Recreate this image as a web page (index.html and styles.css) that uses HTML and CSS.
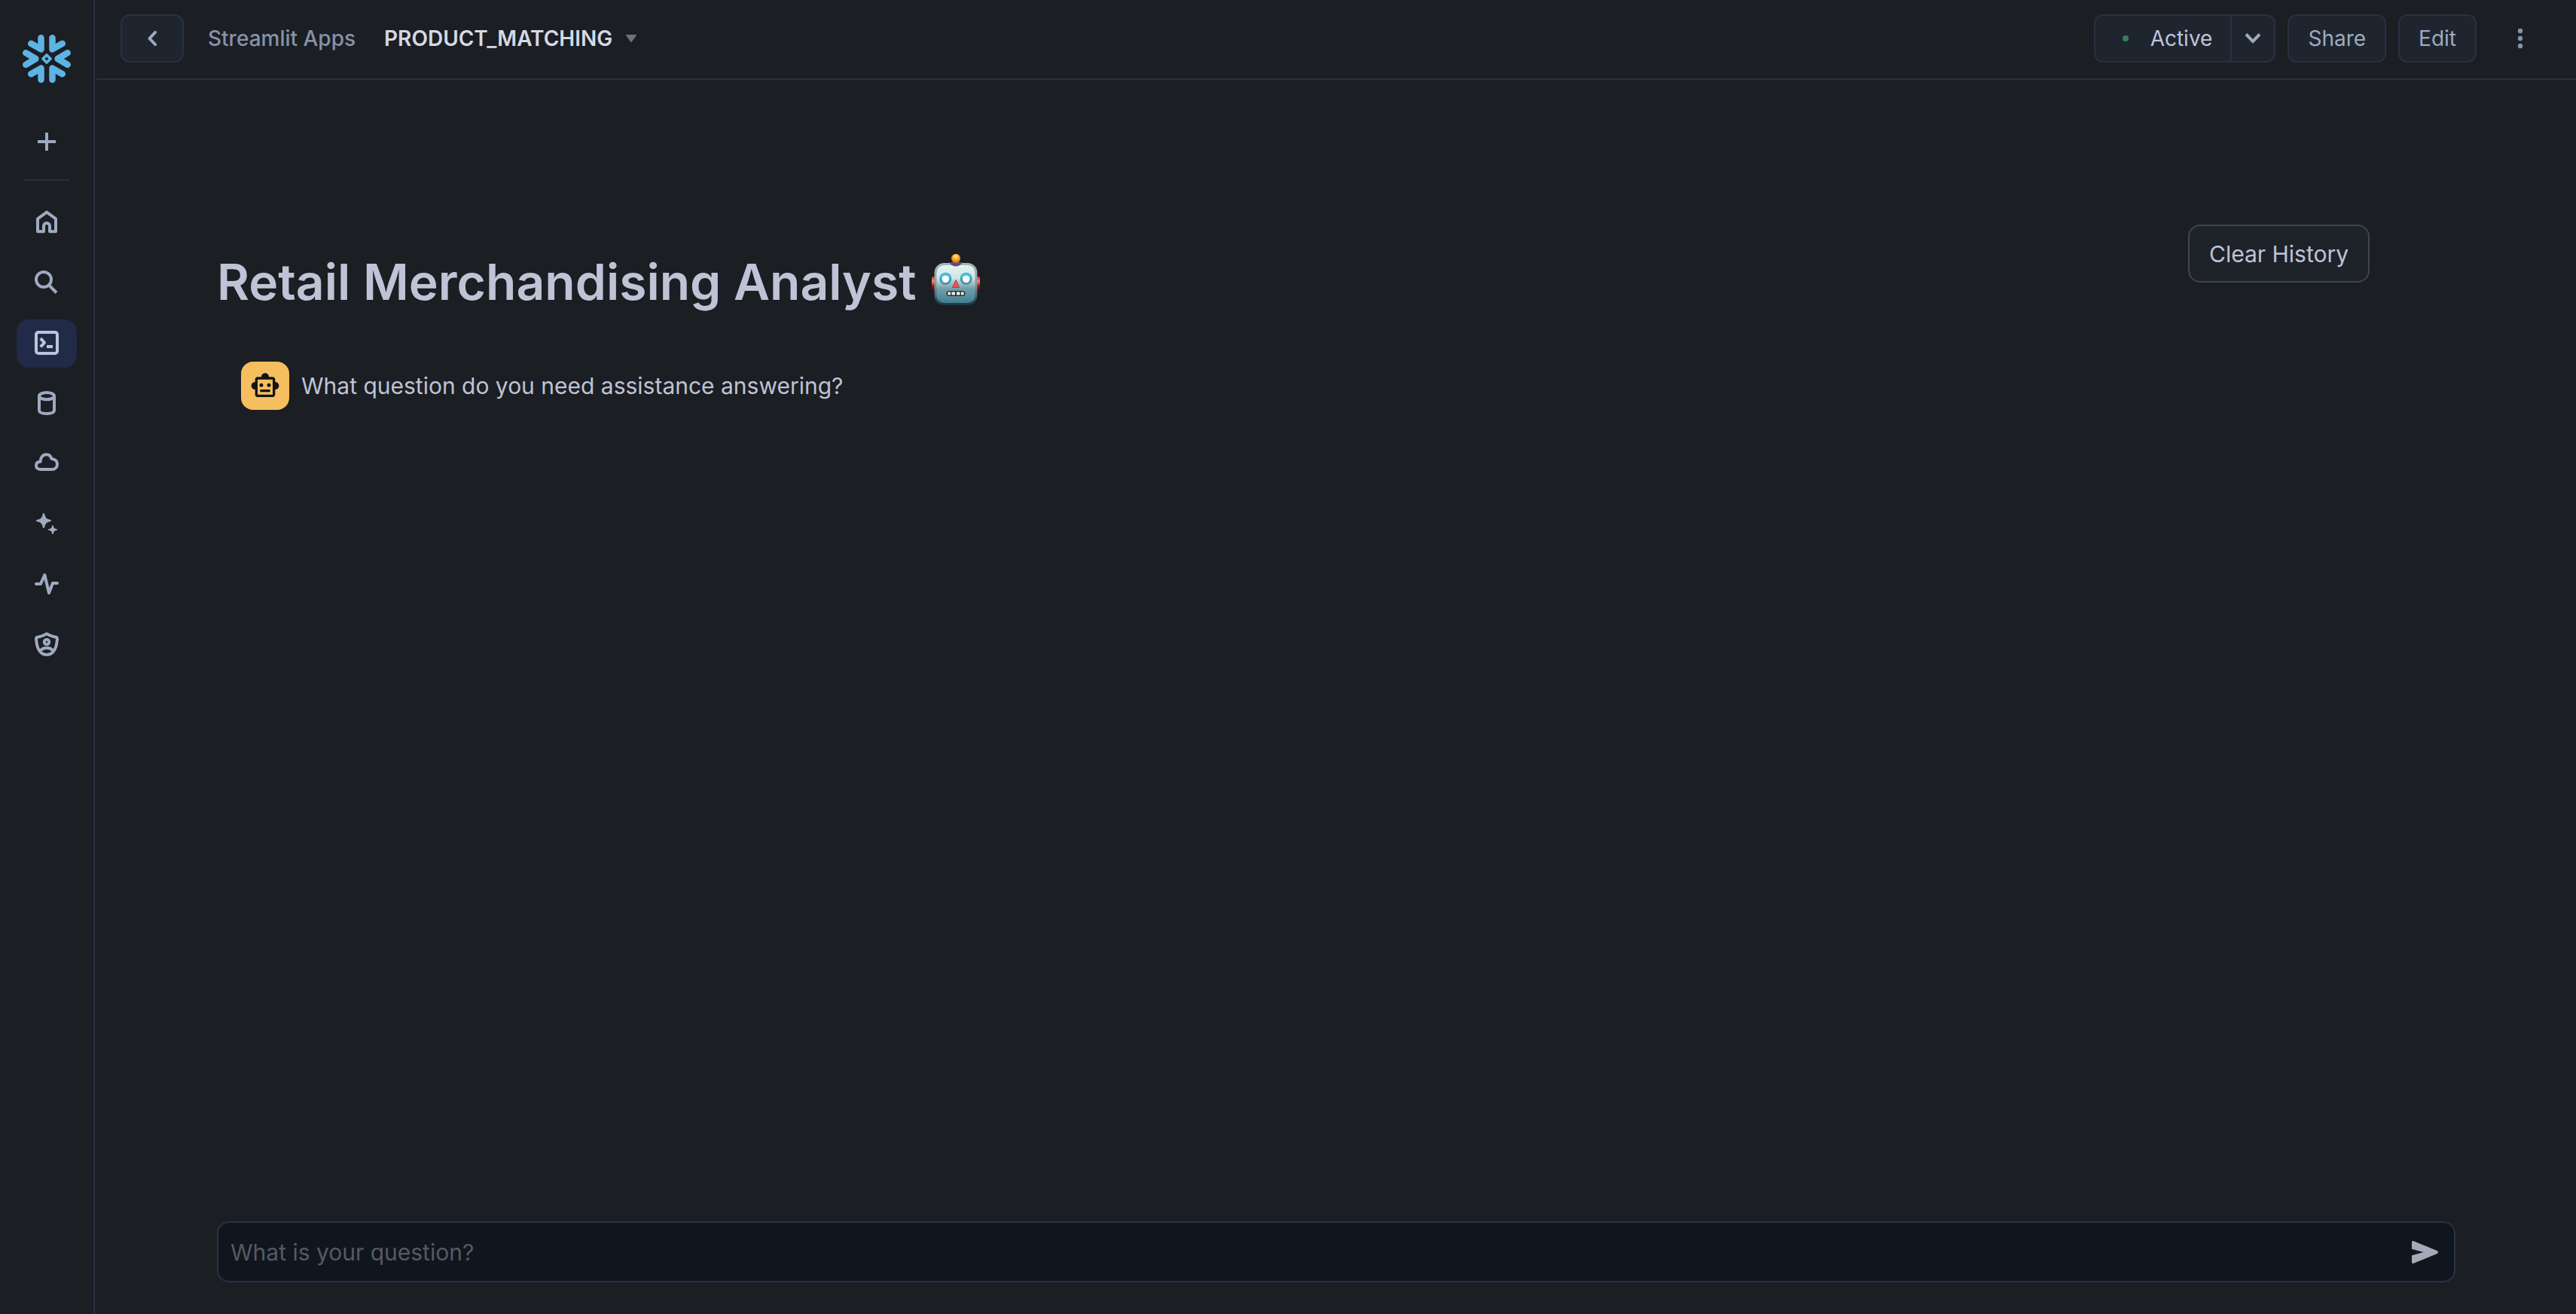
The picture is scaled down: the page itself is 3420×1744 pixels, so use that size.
FILE: index.html
```html
<!DOCTYPE html>
<html lang="en">
<head>
<meta charset="utf-8">
<title>PRODUCT_MATCHING - Streamlit Apps</title>
<link rel="stylesheet" href="styles.css">
</head>
<body>
<div class="app">
  <aside class="sidebar">
    <a class="logo" href="#" aria-label="Snowflake">
      <svg width="64" height="64" viewBox="0 0 64 64" fill="none" stroke="currentColor" stroke-width="8.5" stroke-linecap="round" stroke-linejoin="round">
        <path d="M24.5 4.3V19.4L11.2 11.8M39.5 4.3V19.4L52.8 11.8M24.5 59.7V44.6L11.2 52.2M39.5 59.7V44.6L52.8 52.2M4.3 24.2L17.4 32 4.3 39.8M59.7 24.2L46.6 32 59.7 39.8"/>
        <path stroke-width="3.8" d="M32 27L37 32 32 37 27 32z"/>
      </svg>
    </a>
    <button class="create" type="button" aria-label="Create">
      <svg width="24" height="24" viewBox="0 0 24 24" fill="currentColor"><path d="M10 0h4v10h10v4H14v10h-4V14H0v-4h10z"/></svg>
    </button>
    <nav class="nav">
      <a class="nav-item" href="#" aria-label="Home">
        <svg class="icon" viewBox="0 0 32 32"><path d="M4 28.3V11.4L16 2.6 28 11.4V28.3H20V21a4 4 0 0 0-8 0v7.3z"/></svg>
      </a>
      <a class="nav-item" href="#" aria-label="Search">
        <svg class="icon" viewBox="0 0 32 32"><circle cx="12" cy="12" r="10"/><path d="M19 19.5L29 29.5"/></svg>
      </a>
      <a class="nav-item nav-item-active" href="#" aria-label="Projects">
        <svg class="icon" viewBox="0 0 32 32"><rect x="2" y="2" width="28" height="28" rx="3"/><path d="M7.8 10.2L13 15.8 7.8 21.4M16 21h8"/></svg>
      </a>
      <a class="nav-item" href="#" aria-label="Data">
        <svg class="icon" viewBox="0 0 32 32"><ellipse cx="16" cy="6.6" rx="10" ry="4.6"/><path d="M6 7v18.5C6 28.500 10 30 16 30s10-1.500 10-4.500V7"/></svg>
      </a>
      <a class="nav-item" href="#" aria-label="Data products">
        <svg class="icon" viewBox="0 0 32 32"><path d="M7.500 24C4 24 2 21.500 2 19c0-3 2-5 5.500-5.200C8 8 11 4.300 15.500 4.300c3.500 0 6 2 7 5.700C27 10.200 30 13 30 17s-3 7-7 7z"/></svg>
      </a>
      <a class="nav-item" href="#" aria-label="AI and ML">
        <svg class="icon icon-solid" viewBox="0 0 32 32"><path d="M12 2c1 0 1.200 1 1.500 2.500.8 3.600 2.400 5.200 6 6C21 10.800 22 11 22 12s-1 1.200-2.500 1.500c-3.600.8-5.200 2.400-6 6C13.200 21 13 22 12 22s-1.200-1-1.500-2.500c-.8-3.600-2.400-5.200-6-6C3 13.200 2 13 2 12s1-1.200 2.500-1.500c3.600-.8 5.200-2.400 6-6C10.800 3 11 2 12 2zM24 18c.7 0 .8.600 1 1.500.5 2.200 1.300 3 3.500 3.500.9.200 1.500.3 1.500 1s-.6.800-1.500 1c-2.200.5-3 1.300-3.500 3.500-.2.900-.3 1.500-1 1.500s-.8-.6-1-1.500c-.5-2.200-1.300-3-3.500-3.500-.9-.2-1.500-.3-1.500-1s.6-.8 1.500-1c2.200-.5 3-1.300 3.500-3.500.2-.9.300-1.500 1-1.500z"/></svg>
      </a>
      <a class="nav-item" href="#" aria-label="Monitoring">
        <svg class="icon icon-round" viewBox="0 0 32 32"><path d="M2 16h6L13.300 4 19 28 24 15h6"/></svg>
      </a>
      <a class="nav-item" href="#" aria-label="Admin">
        <svg class="icon" viewBox="0 0 32 32"><path d="M16 2.200C12.500 4.500 7.500 6 3.500 6.800 1.800 7.200 2 8.500 2.100 10 2.600 17 5 30 16 30S29.400 17 29.900 10c.1-1.500.3-2.800-1.400-3.200C24.500 6 19.500 4.500 16 2.200z"/><circle cx="16" cy="13" r="3.200"/><path d="M8 24.500c1.500-2.500 4.500-3.500 8-3.500s6.500 1 8 3.500"/></svg>
      </a>
    </nav>
  </aside>

  <div class="page">
    <header class="topbar">
      <button class="btn back" type="button" aria-label="Back">
        <svg width="12" height="20" viewBox="0 0 12 20" fill="none" stroke="currentColor" stroke-width="4" stroke-linecap="round" stroke-linejoin="round"><path d="M10 2L2.500 10 10 18"/></svg>
      </button>
      <a class="crumb" href="#">Streamlit Apps</a>
      <button class="app-name" type="button">
        PRODUCT_MATCHING
        <svg width="14" height="10" viewBox="0 0 14 10" fill="currentColor"><path d="M1 0h12q1.600 0 .6 1.500L8 9.300q-1 1.200-2 0L.4 1.500Q-.6 0 1 0z"/></svg>
      </button>
      <div class="actions">
        <div class="split">
          <button class="btn status" type="button"><span class="dot"></span>Active</button>
          <button class="btn more-status" type="button" aria-label="Status options">
            <svg width="22" height="14" viewBox="0 0 22 14" fill="none" stroke="currentColor" stroke-width="4"><path d="M2 1.500L11 10.800 20 1.500"/></svg>
          </button>
        </div>
        <button class="btn" type="button">Share</button>
        <button class="btn" type="button">Edit</button>
        <button class="kebab" type="button" aria-label="More options">
          <svg width="8" height="28" viewBox="0 0 8 28" fill="currentColor"><circle cx="4" cy="4" r="3.200"/><circle cx="4" cy="14" r="3.200"/><circle cx="4" cy="24" r="3.200"/></svg>
        </button>
      </div>
    </header>

    <main class="content">
      <div class="heading">
        <h1 class="title">Retail Merchandising Analyst
          <svg class="robot" role="img" aria-label="robot" viewBox="0 0 64 68">
            <defs>
              <linearGradient id="face" x1="0" y1="0" x2="0" y2="1"><stop offset="0" stop-color="#e4f5f3"/><stop offset=".35" stop-color="#cfe3e3"/><stop offset=".62" stop-color="#719fa9"/><stop offset="1" stop-color="#417f91"/></linearGradient>
              <linearGradient id="rim" x1="0" y1="0" x2="0" y2="1"><stop offset="0" stop-color="#a9b9b5"/><stop offset=".5" stop-color="#7e9da3"/><stop offset="1" stop-color="#163947"/></linearGradient>
              <linearGradient id="ear" x1="0" y1="0" x2="0" y2="1"><stop offset="0" stop-color="#e52a20"/><stop offset=".35" stop-color="#f08a80"/><stop offset=".65" stop-color="#a01510"/><stop offset="1" stop-color="#4a0806"/></linearGradient>
              <radialGradient id="bulb" cx=".5" cy=".3" r=".7"><stop offset="0" stop-color="#fff2a0"/><stop offset=".4" stop-color="#fbb52c"/><stop offset="1" stop-color="#d06a10"/></radialGradient>
              <linearGradient id="eye" x1="0" y1="0" x2="0" y2="1"><stop offset="0" stop-color="#2aa3d0"/><stop offset=".5" stop-color="#3d9cc0"/><stop offset="1" stop-color="#4b8aa0"/></linearGradient>
            </defs>
            <rect x="0" y="30" width="8" height="19" rx="1.500" fill="url(#ear)"/>
            <rect x="56" y="30" width="8" height="19" rx="1.500" fill="url(#ear)"/>
            <rect x="3.500" y="12" width="57" height="56" rx="13" fill="url(#rim)"/>
            <rect x="6.500" y="15" width="51" height="50" rx="10" fill="url(#face)"/>
            <path d="M24 11h16c0 3-4 5.500-8 5.500S24 14 24 11z" fill="#614a80"/>
            <circle cx="32" cy="6" r="6" fill="url(#bulb)"/>
            <circle cx="18.300" cy="33" r="8" fill="url(#eye)"/><circle cx="45.700" cy="33" r="8" fill="url(#eye)"/>
            <path d="M12.500 32a6 6 0 0 1 11.600 0M39.900 32a6 6 0 0 1 11.600 0" fill="none" stroke="#4fd0f0" stroke-width="2"/>
            <circle cx="18.300" cy="33.500" r="4.800" fill="#f8fdfd"/><circle cx="45.700" cy="33.500" r="4.800" fill="#f8fdfd"/>
            <path d="M32 34.500L36.500 44.500h-9z" fill="#e35a58" stroke="#a54048" stroke-width="1" stroke-linejoin="round"/>
            <rect x="19.500" y="49" width="25" height="7" rx="3.500" fill="#33322c"/>
            <path d="M22 50.500h3v4h-3q-1.500-2 0-4zM26.500 50.500h4.500v4h-4.500zM33 50.500h4.500v4H33zM39 50.500h3q1.500 2 0 4h-3z" fill="#eeeee4"/>
          </svg>
        </h1>
        <div class="heading-action"><button class="clear" type="button">Clear History</button></div>
      </div>

      <div class="message">
        <span class="avatar">
          <svg width="40" height="40" viewBox="0 0 24 24" fill="currentColor"><path d="M20 9V7c0-1.100-.9-2-2-2h-3c0-1.660-1.340-3-3-3S9 3.340 9 5H6c-1.100 0-2 .9-2 2v2c-1.660 0-3 1.340-3 3s1.340 3 3 3v4c0 1.100.9 2 2 2h12c1.100 0 2-.9 2-2v-4c1.660 0 3-1.340 3-3s-1.340-3-3-3zm-2 10H6V7h12v12zm-9-6c-.83 0-1.500-.67-1.500-1.500S8.170 10 9 10s1.500.67 1.500 1.500S9.830 13 9 13zm7.500-1.500c0 .83-.67 1.500-1.500 1.500s-1.500-.67-1.500-1.500.67-1.500 1.500-1.500 1.500.67 1.500 1.500zM8 15h8v2H8v-2z"/></svg>
        </span>
        <p class="message-text">What question do you need assistance answering?</p>
      </div>

      <form class="chat">
        <input class="chat-input" type="text" placeholder="What is your question?" aria-label="What is your question?">
        <button class="send" type="button" aria-label="Send">
          <svg width="35" height="30" viewBox="0 0 35 30" fill="currentColor"><path d="M0 1.500Q.2-.5 2.500.2L33 12.800Q35 13.600 35 15T33 17.200L2.500 29.800Q.2 30.500 0 28.500V19.300L15.500 15 0 10.700z"/></svg>
        </button>
      </form>
    </main>
  </div>
</div>
</body>
</html>
```
FILE: styles.css
```css
* {
  box-sizing: border-box;
}

body {
  margin: 0;
  background: #1b1e22;
  color: #bdc4d9;
  font-family: Inter, "Liberation Sans", sans-serif;
  font-size: 28px;
}

button,
input {
  font: inherit;
  color: inherit;
}

button {
  display: flex;
  align-items: center;
  justify-content: center;
  padding: 0;
  border: 0;
  background: none;
}

a {
  color: inherit;
  text-decoration: none;
}

svg {
  display: block;
  flex: none;
}

.app {
  display: flex;
  gap: 2px;
  min-height: 100vh;
}

/* Left navigation rail */
.sidebar {
  display: flex;
  flex: none;
  flex-direction: column;
  align-items: center;
  width: 126px;
  padding-top: 46px;
  border-right: 2px solid #293042;
  color: #9faac1;
}

.logo {
  color: #5cb3e4;
}

.create {
  width: 60px;
  height: 130px;
  padding-bottom: 24px;
  padding-top: 52px;
  border-bottom: 2px solid #293042;
}

.nav {
  display: flex;
  flex-direction: column;
  gap: 16px;
  padding-top: 24px;
}

.nav-item {
  display: flex;
  align-items: center;
  justify-content: center;
  width: 80px;
  height: 64px;
  padding-bottom: 2px;
  border-radius: 16px;
}

.nav-item-active {
  background: #212a46;
  color: #bdc4d9;
}

.icon {
  width: 32px;
  height: 32px;
  fill: none;
  stroke: currentColor;
  stroke-width: 4;
  stroke-linejoin: round;
}

.icon-round {
  stroke-linecap: round;
}

.icon-solid {
  fill: currentColor;
  stroke: none;
}

/* Top bar */
.page {
  display: flex;
  flex: 1;
  flex-direction: column;
  min-width: 0;
}

.topbar {
  display: flex;
  align-items: center;
  height: 106px;
  padding: 0 54px 2px 32px;
  border-bottom: 2px solid #293042;
}

.btn {
  height: 64px;
  padding: 0 25px;
  border: 2px solid #293042;
  border-radius: 12px;
  background: #1e252e;
  color: #9faac1;
}

.back {
  width: 84px;
  margin-right: 32px;
}

.crumb {
  margin-right: 38px;
  color: #8592aa;
  font-weight: 500;
}

.app-name {
  gap: 18px;
  color: #d5d9e4;
  font-weight: 600;
}

.app-name svg {
  color: #6d7178;
}

.actions {
  display: flex;
  align-items: center;
  gap: 16px;
  margin-left: auto;
}

.split {
  display: flex;
}

.status {
  gap: 29px;
  padding: 0 24px 0 36px;
  border-right: 0;
  border-radius: 12px 0 0 12px;
  color: #bdc4d9;
}

.dot {
  width: 8px;
  height: 8px;
  border-radius: 50%;
  background: #357f5f;
}

.more-status {
  width: 60px;
  padding: 0;
  border-radius: 0 12px 12px 0;
}

.kebab {
  width: 40px;
  height: 64px;
  margin-left: 22px;
}

.kebab svg {
  color: #8592aa;
}

/* App content */
.content {
  display: flex;
  flex: 1;
  flex-direction: column;
  padding: 192px 160px 42px;
  color: #bfc3d6;
  font-size: 30px;
}

.heading {
  display: grid;
  grid-template-columns: 1fr 355px;
}

.title {
  display: flex;
  align-items: center;
  gap: 20px;
  margin: 32px 0 0;
  font-size: 66px;
  font-weight: 600;
  line-height: 88px;
}

.robot {
  width: 64px;
  height: 68px;
  margin-bottom: 6px;
}

.clear {
  height: 77px;
  padding: 0 26px;
  border: 2px solid #41444c;
  border-radius: 16px;
  background: #1e2229;
}

.message {
  display: flex;
  align-items: center;
  gap: 16px;
  margin-top: 62px;
  padding-left: 32px;
}

.avatar {
  display: flex;
  align-items: center;
  justify-content: center;
  width: 64px;
  height: 64px;
  border-radius: 16px;
  background: #f5be5e;
  color: #111418;
}

.message-text {
  margin: 0;
}

.chat {
  display: flex;
  align-items: center;
  height: 81px;
  margin-top: auto;
  padding: 0 21px 0 16px;
  border: 2px solid #2b3146;
  border-radius: 16px;
  background: #10161d;
}

.chat-input {
  flex: 1;
  min-width: 0;
  padding: 0;
  border: 0;
  outline: 0;
  background: none;
}

.chat-input::placeholder {
  color: #565966;
  opacity: 1;
}

.send {
  color: #a6a9b9;
}
```
